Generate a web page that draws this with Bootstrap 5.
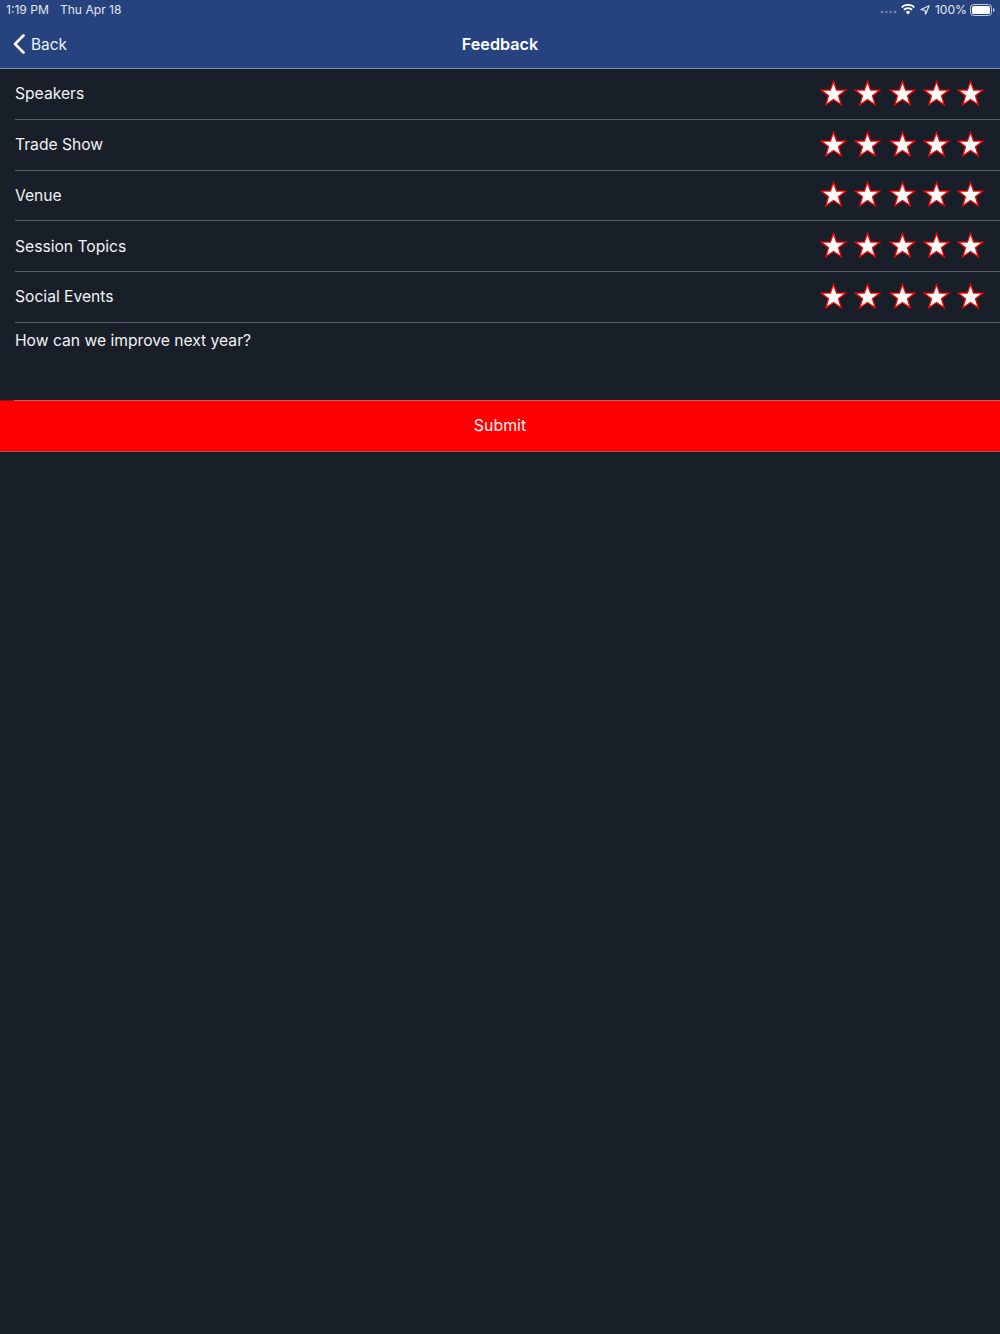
<!DOCTYPE html>
<html lang="en"><head><meta charset="utf-8"><title>Feedback</title>
<link rel="stylesheet" href="https://cdn.jsdelivr.net/npm/bootstrap@5.3.0/dist/css/bootstrap.min.css">
<style>
html,body{height:100%}
body{background:#181f29;color:#f2f3f5;font-family:Inter,"Liberation Sans",sans-serif;font-size:15.65px}
.fb-top{background:#264380;color:#fff;border-bottom:1px solid #7d8db0;height:69px}
.fb-status{height:20px;font-size:12.1px;padding:0 5px 0 6px;color:#e4e8f0}
.fb-time{margin-right:11px}
.fb-nav{height:48px;position:relative}
.fb-title{font-weight:600;font-size:16.2px;position:absolute;left:0;right:0;text-align:center}
.fb-back{padding-left:12px;gap:5px;color:#eef1f6}
.fb-back span{padding-top:2px;font-size:15.4px}
.fb-row{height:50.8px;margin-left:15px;border-bottom:1px solid #565b66;padding-right:16px}
.fb-stars{gap:7.2px;margin-bottom:2px}
.fb-star{width:27px;height:26px;display:block}
.fb-q{height:77.500px;margin-left:15px;padding-top:6px}
.fb-submit{height:51px;background:#f00;color:#f6f6f6;border-top:1px solid;border-image:linear-gradient(90deg,#8a1015 15px,#d8555a 15px) 1;box-shadow:0 1px 0 #a9515a;font-size:15.9px;padding-bottom:2px}
.fb-sys{gap:5px}
.fb-dots{margin-right:-1px}
.fb-batt{margin-left:-2px}
</style></head><body>
<svg width="0" height="0" class="position-absolute"><defs><symbol id="st" viewBox="0 0 27 26"><path d="M13.5 1.500 16.600 10 25.800 10.100 18.500 15.800 21.200 24.700 13.500 19.500 5.800 24.700 8.500 15.800 1.200 10.100 10.400 10Z" fill="#fff" stroke="#f00" stroke-width="1.300" stroke-linejoin="miter"/></symbol></defs></svg>
<header class="fb-top">
 <div class="fb-status d-flex align-items-center justify-content-between">
  <div class="d-flex"><span class="fb-time">1:19 PM</span><span>Thu Apr 18</span></div>
  <div class="fb-sys d-flex align-items-center">
   <svg width="17" height="4" viewBox="0 0 17 4" class="fb-dots mt-1"><g fill="#6f7fa6"><circle cx="2" cy="2" r="1.300"/><circle cx="6.300" cy="2" r="1.300"/><circle cx="10.600" cy="2" r="1.300"/><circle cx="15" cy="2" r="1.300"/></g></svg>
   <svg width="14" height="11" viewBox="0 0 14 11"><path d="M7 10.500 4.800 8A3.200 3.200 0 0 1 9.200 8ZM3.500 6.500 2.200 5.100A7 7 0 0 1 11.800 5.100L10.500 6.500A5.200 5.200 0 0 0 3.500 6.500ZM1.200 4 0 2.800A10 10 0 0 1 14 2.800L12.800 4A8.300 8.300 0 0 0 1.200 4Z" fill="#fff"/></svg>
   <svg width="10" height="10" viewBox="0 0 10 10"><path d="M9.200.8 1 4.600 5 5.200 5.600 9.200Z" fill="none" stroke="#e8ebf2" stroke-width="1.100" stroke-linejoin="round"/></svg>
   <span>100%</span>
   <svg width="25" height="12" viewBox="0 0 25 12" class="fb-batt"><rect x=".5" y=".5" width="21" height="11" rx="3" fill="none" stroke="#c5cbdb"/><rect x="2" y="2" width="18" height="8" rx="1.500" fill="#fff"/><path d="M23 4v4c1-.3 1.500-1 1.500-2s-.5-1.700-1.500-2Z" fill="#c5cbdb"/></svg>
  </div>
 </div>
 <div class="fb-nav d-flex align-items-center">
  <div class="fb-title">Feedback</div>
  <div class="fb-back d-flex align-items-center">
   <svg width="14" height="20" viewBox="0 0 14 20"><path d="M11.500 1.500 3 10l8.500 8.500" fill="none" stroke="#fff" stroke-width="2.600" stroke-linecap="round" stroke-linejoin="round"/></svg>
   <span>Back</span>
  </div>
 </div>
</header>
<main>
 <div class="fb-row d-flex align-items-center justify-content-between"><span>Speakers</span><div class="fb-stars d-flex"><svg class="fb-star"><use href="#st"/></svg><svg class="fb-star"><use href="#st"/></svg><svg class="fb-star"><use href="#st"/></svg><svg class="fb-star"><use href="#st"/></svg><svg class="fb-star"><use href="#st"/></svg></div></div>
 <div class="fb-row d-flex align-items-center justify-content-between"><span>Trade Show</span><div class="fb-stars d-flex"><svg class="fb-star"><use href="#st"/></svg><svg class="fb-star"><use href="#st"/></svg><svg class="fb-star"><use href="#st"/></svg><svg class="fb-star"><use href="#st"/></svg><svg class="fb-star"><use href="#st"/></svg></div></div>
 <div class="fb-row d-flex align-items-center justify-content-between"><span>Venue</span><div class="fb-stars d-flex"><svg class="fb-star"><use href="#st"/></svg><svg class="fb-star"><use href="#st"/></svg><svg class="fb-star"><use href="#st"/></svg><svg class="fb-star"><use href="#st"/></svg><svg class="fb-star"><use href="#st"/></svg></div></div>
 <div class="fb-row d-flex align-items-center justify-content-between"><span>Session Topics</span><div class="fb-stars d-flex"><svg class="fb-star"><use href="#st"/></svg><svg class="fb-star"><use href="#st"/></svg><svg class="fb-star"><use href="#st"/></svg><svg class="fb-star"><use href="#st"/></svg><svg class="fb-star"><use href="#st"/></svg></div></div>
 <div class="fb-row d-flex align-items-center justify-content-between"><span>Social Events</span><div class="fb-stars d-flex"><svg class="fb-star"><use href="#st"/></svg><svg class="fb-star"><use href="#st"/></svg><svg class="fb-star"><use href="#st"/></svg><svg class="fb-star"><use href="#st"/></svg><svg class="fb-star"><use href="#st"/></svg></div></div>
 <div class="fb-q">How can we improve next year?</div>
 <div class="fb-submit d-flex align-items-center justify-content-center">Submit</div>
</main>
<script src="https://cdn.jsdelivr.net/npm/bootstrap@5.3.0/dist/js/bootstrap.bundle.min.js"></script>
</body></html>
